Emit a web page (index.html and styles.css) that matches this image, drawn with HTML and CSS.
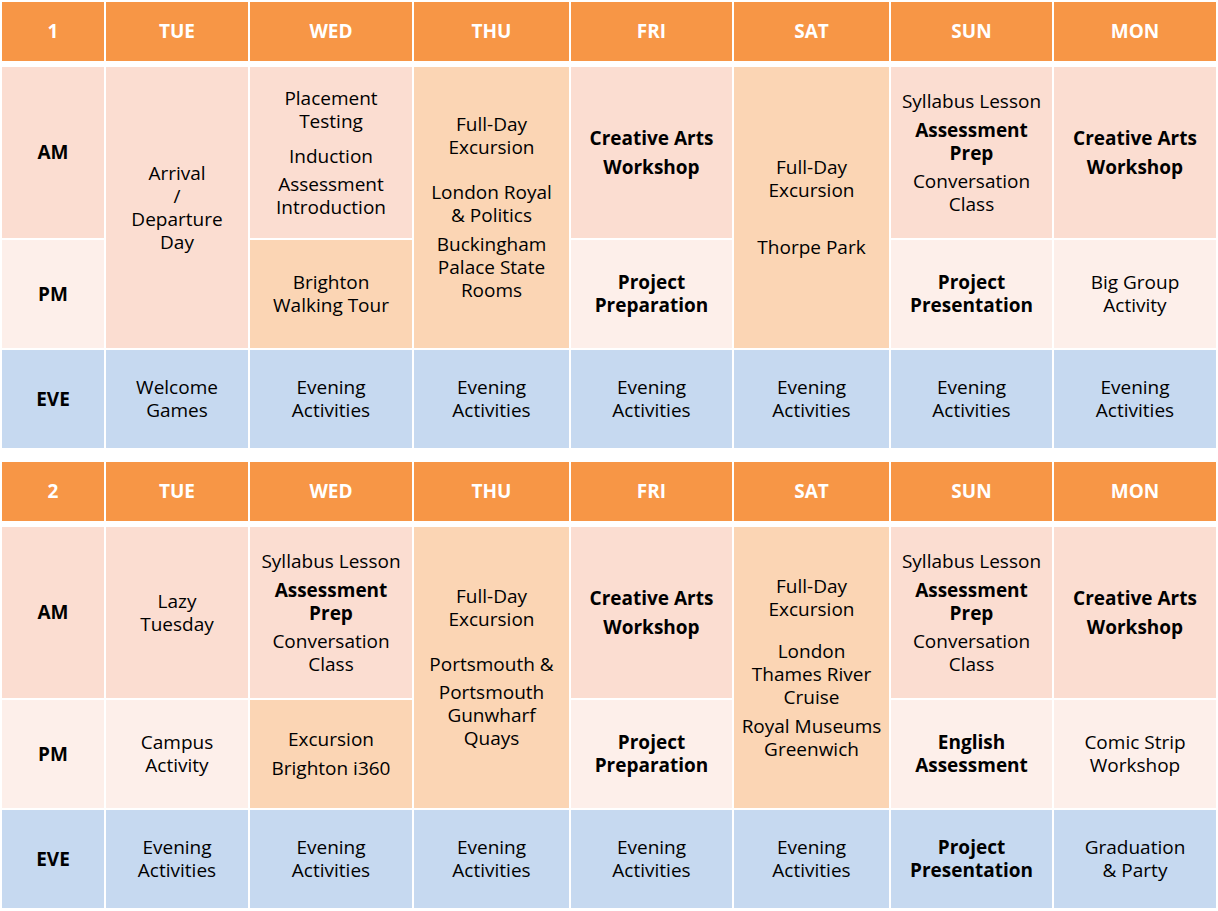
FILE: index.html
```html
<!DOCTYPE html>
<html lang="en">
<head>
<meta charset="utf-8">
<title>Timetable</title>
<link rel="stylesheet" href="styles.css">
</head>
<body>
<div class="page">
  <section class="week">
    <div class="grid head">
      <div class="hc">1</div><div class="hc">TUE</div><div class="hc">WED</div><div class="hc">THU</div><div class="hc">FRI</div><div class="hc">SAT</div><div class="hc">SUN</div><div class="hc">MON</div>
    </div>
    <div class="grid body">
      <div class="c am label"><span class="l">AM</span></div>
      <div class="c am span2"><p><span class="l">Arrival</span><span class="l">/</span><span class="l">Departure</span><span class="l">Day</span></p></div>
      <div class="c am"><p><span class="l">Placement</span><span class="l">Testing</span></p><p class="g12"><span class="l">Induction</span></p><p class="g5"><span class="l">Assessment</span><span class="l">Introduction</span></p></div>
      <div class="c ex span2"><p><span class="l">Full-Day</span><span class="l">Excursion</span></p><p class="g22"><span class="l">London Royal</span><span class="l">&amp; Politics</span></p><p><span class="l">Buckingham</span><span class="l">Palace State</span><span class="l">Rooms</span></p></div>
      <div class="c am"><p class="b"><span class="l">Creative Arts</span></p><p class="b"><span class="l">Workshop</span></p></div>
      <div class="c ex span2"><p><span class="l">Full-Day</span><span class="l">Excursion</span></p><p class="g34"><span class="l">Thorpe Park</span></p></div>
      <div class="c am"><p><span class="l">Syllabus Lesson</span></p><p class="b"><span class="l">Assessment</span><span class="l">Prep</span></p><p class="g5"><span class="l">Conversation</span><span class="l">Class</span></p></div>
      <div class="c am"><p class="b"><span class="l">Creative Arts</span></p><p class="b"><span class="l">Workshop</span></p></div>

      <div class="c pm label"><span class="l">PM</span></div>
      <div class="c ex"><p><span class="l">Brighton</span><span class="l">Walking Tour</span></p></div>
      <div class="c pm"><p class="b"><span class="l">Project</span><span class="l">Preparation</span></p></div>
      <div class="c pm"><p class="b"><span class="l">Project</span><span class="l">Presentation</span></p></div>
      <div class="c pm"><p><span class="l">Big Group</span><span class="l">Activity</span></p></div>

      <div class="c eve label"><span class="l">EVE</span></div>
      <div class="c eve"><p><span class="l">Welcome</span><span class="l">Games</span></p></div>
      <div class="c eve"><p><span class="l">Evening</span><span class="l">Activities</span></p></div>
      <div class="c eve"><p><span class="l">Evening</span><span class="l">Activities</span></p></div>
      <div class="c eve"><p><span class="l">Evening</span><span class="l">Activities</span></p></div>
      <div class="c eve"><p><span class="l">Evening</span><span class="l">Activities</span></p></div>
      <div class="c eve"><p><span class="l">Evening</span><span class="l">Activities</span></p></div>
      <div class="c eve"><p><span class="l">Evening</span><span class="l">Activities</span></p></div>
    </div>
  </section>

  <section class="week">
    <div class="grid head">
      <div class="hc">2</div><div class="hc">TUE</div><div class="hc">WED</div><div class="hc">THU</div><div class="hc">FRI</div><div class="hc">SAT</div><div class="hc">SUN</div><div class="hc">MON</div>
    </div>
    <div class="grid body">
      <div class="c am label"><span class="l">AM</span></div>
      <div class="c am"><p><span class="l">Lazy</span><span class="l">Tuesday</span></p></div>
      <div class="c am"><p><span class="l">Syllabus Lesson</span></p><p class="b"><span class="l">Assessment</span><span class="l">Prep</span></p><p class="g5"><span class="l">Conversation</span><span class="l">Class</span></p></div>
      <div class="c ex span2"><p><span class="l">Full-Day</span><span class="l">Excursion</span></p><p class="g22"><span class="l">Portsmouth &amp;</span></p><p class="g5"><span class="l">Portsmouth</span><span class="l">Gunwharf</span><span class="l">Quays</span></p></div>
      <div class="c am"><p class="b"><span class="l">Creative Arts</span></p><p class="b"><span class="l">Workshop</span></p></div>
      <div class="c ex span2"><p><span class="l">Full-Day</span><span class="l">Excursion</span></p><p class="g19"><span class="l">London</span><span class="l">Thames River</span><span class="l">Cruise</span></p><p><span class="l">Royal Museums</span><span class="l">Greenwich</span></p></div>
      <div class="c am"><p><span class="l">Syllabus Lesson</span></p><p class="b"><span class="l">Assessment</span><span class="l">Prep</span></p><p class="g5"><span class="l">Conversation</span><span class="l">Class</span></p></div>
      <div class="c am"><p class="b"><span class="l">Creative Arts</span></p><p class="b"><span class="l">Workshop</span></p></div>

      <div class="c pm label"><span class="l">PM</span></div>
      <div class="c pm"><p><span class="l">Campus</span><span class="l">Activity</span></p></div>
      <div class="c ex"><p><span class="l">Excursion</span></p><p><span class="l">Brighton i360</span></p></div>
      <div class="c pm"><p class="b"><span class="l">Project</span><span class="l">Preparation</span></p></div>
      <div class="c pm"><p class="b"><span class="l">English</span><span class="l">Assessment</span></p></div>
      <div class="c pm"><p><span class="l">Comic Strip</span><span class="l">Workshop</span></p></div>

      <div class="c eve label"><span class="l">EVE</span></div>
      <div class="c eve"><p><span class="l">Evening</span><span class="l">Activities</span></p></div>
      <div class="c eve"><p><span class="l">Evening</span><span class="l">Activities</span></p></div>
      <div class="c eve"><p><span class="l">Evening</span><span class="l">Activities</span></p></div>
      <div class="c eve"><p><span class="l">Evening</span><span class="l">Activities</span></p></div>
      <div class="c eve"><p><span class="l">Evening</span><span class="l">Activities</span></p></div>
      <div class="c eve"><p class="b"><span class="l">Project</span><span class="l">Presentation</span></p></div>
      <div class="c eve"><p><span class="l">Graduation</span><span class="l">&amp; Party</span></p></div>
    </div>
  </section>
</div>
</body>
</html>
```

FILE: styles.css
```css
* { box-sizing: border-box; }

html, body {
  margin: 0;
  padding: 0;
  background: #ffffff;
}

body {
  font-family: "Open Sans", "Noto Sans", "Liberation Sans", sans-serif;
  font-size: 19px;
  line-height: 23px;
  color: #000000;
}

.page {
  padding: 2px;
  display: flex;
  flex-direction: column;
  gap: 14px;
}

.week {
  display: flex;
  flex-direction: column;
  gap: 6px;
}

.grid {
  display: grid;
  grid-template-columns: 102px 142px 162px 155px 161px 155px 161px 162px;
  column-gap: 2px;
  row-gap: 2px;
}

.head {
  grid-template-rows: 59px;
}

.body {
  grid-template-rows: 171px 108px 98px;
}

.hc {
  background: #f79646;
  color: #ffffff;
  font-weight: 700;
  font-size: 19px;
  display: flex;
  align-items: center;
  justify-content: center;
}

.c {
  display: flex;
  flex-direction: column;
  align-items: center;
  justify-content: center;
  text-align: center;
}

.c p {
  margin: 0;
}

.c p + p {
  margin-top: 6px;
}

.c p.g5 { margin-top: 5px; }
.c p.g12 { margin-top: 12px; }
.c p.g19 { margin-top: 19px; }
.c p.g22 { margin-top: 22px; }
.c p.g34 { margin-top: 34px; }

.l {
  display: block;
  height: 23px;
  white-space: nowrap;
}

.b { font-weight: 700; }

.label { font-weight: 700; }

.span2 { grid-row: span 2; }

.am { background: #fbddd1; }
.pm { background: #fdefea; }
.ex { background: #fbd5b4; }
.eve { background: #c6d9f0; }
```
